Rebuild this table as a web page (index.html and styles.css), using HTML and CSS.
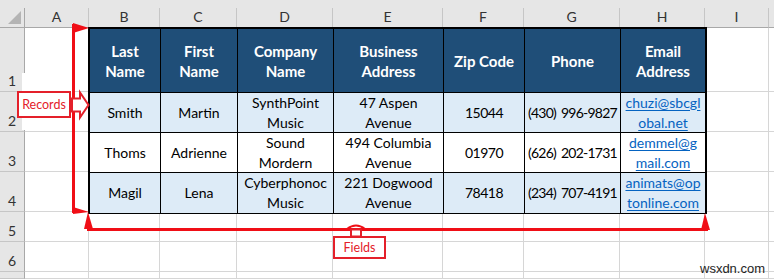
FILE: index.html
```html
<!DOCTYPE html>
<html>
<head>
<meta charset="utf-8">
<link rel="stylesheet" href="styles.css">
</head>
<body>
<div class="page">
  <div class="sheet">
    <div class="topstrip"></div>
    <div class="corner"><svg width="14" height="14" viewBox="0 0 14 14"><polygon points="13,0 13,13 0,13" fill="#b4b4b4"/></svg></div>
    <div class="ch">A</div><div class="ch">B</div><div class="ch">C</div><div class="ch">D</div><div class="ch">E</div><div class="ch">F</div><div class="ch">G</div><div class="ch">H</div><div class="ch">I</div><div class="ch last"></div>

    <div class="rh">1</div><div class="c"></div>
    <div class="table">
      <div class="th">Last<br>Name</div>
      <div class="th">First<br>Name</div>
      <div class="th">Company<br>Name</div>
      <div class="th">Business<br>Address</div>
      <div class="th">Zip Code</div>
      <div class="th">Phone</div>
      <div class="th end">Email<br>Address</div>

      <div class="td alt">Smith</div>
      <div class="td alt">Martin</div>
      <div class="td alt">SynthPoint<br>Music</div>
      <div class="td alt">47 Aspen<br>Avenue</div>
      <div class="td alt zip">15044</div>
      <div class="td alt phone">(430) 996-9827</div>
      <div class="td alt end"><a class="link">chuzi@sbcgl<br>obal.net</a></div>

      <div class="td">Thoms</div>
      <div class="td">Adrienne</div>
      <div class="td">Sound<br>Mordern</div>
      <div class="td">494 Columbia<br>Avenue</div>
      <div class="td zip">01970</div>
      <div class="td phone">(626) 202-1731</div>
      <div class="td end"><a class="link">demmel@g<br>mail.com</a></div>

      <div class="td alt bottom">Magil</div>
      <div class="td alt bottom">Lena</div>
      <div class="td alt bottom">Cyberphonoc<br>Music</div>
      <div class="td alt bottom">221 Dogwood<br>Avenue</div>
      <div class="td alt bottom zip">78418</div>
      <div class="td alt bottom phone">(234) 707-4191</div>
      <div class="td alt bottom end"><a class="link">animats@op<br>tonline.com</a></div>
    </div>
    <div class="c"></div><div class="c last"></div>

    <div class="rh">2</div><div class="c"></div><div class="c"></div><div class="c last"></div>
    <div class="rh">3</div><div class="c"></div><div class="c"></div><div class="c last"></div>
    <div class="rh">4</div><div class="c"></div><div class="c"></div><div class="c last"></div>

    <div class="rh">5</div><div class="c"></div><div class="c"></div><div class="c"></div><div class="c"></div><div class="c"></div><div class="c"></div><div class="c"></div><div class="c"></div><div class="c"></div><div class="c last"></div>
    <div class="rh">6</div><div class="c"></div><div class="c"></div><div class="c"></div><div class="c"></div><div class="c"></div><div class="c"></div><div class="c"></div><div class="c"></div><div class="c"></div><div class="c last"></div>
    <div class="rh"></div><div class="c"></div><div class="c"></div><div class="c"></div><div class="c"></div><div class="c"></div><div class="c"></div><div class="c"></div><div class="c"></div><div class="c"></div><div class="c last"></div>
  </div>

  <div class="patch"></div>

  <svg class="marks" width="774" height="279" viewBox="0 0 774 279">
    <g fill="#f00e16" stroke="none">
      <rect x="72" y="24" width="3" height="189"/>
      <polygon points="73,23 89,28 73,33"/>
      <polygon points="73,207 89,212 73,214"/>
      <rect x="87" y="228" width="621" height="3"/>
      <polygon points="88,212 93,229 84,229"/>
      <polygon points="705,213 710,230 701,230"/>
    </g>
    <path d="M347 229 Q356 222 365 229" fill="none" stroke="#f00e16" stroke-width="2"/>
    <rect x="351" y="229.5" width="10" height="7" fill="#fff" stroke="#e4202a" stroke-width="2"/>
    <polygon points="72,98.5 80,98.5 80,92.5 88.5,105 80,117.5 80,111.5 72,111.5" fill="#fff" stroke="#e4202a" stroke-width="2"/>
  </svg>

  <div class="label records">Records</div>
  <div class="label fields">Fields</div>
  <div class="watermark">wsxdn.com</div>
</div>
</body>
</html>
```

FILE: styles.css
```css
* { box-sizing: border-box; }
html, body { margin: 0; padding: 0; background: #fff; }
.page {
  position: relative;
  width: 774px;
  height: 279px;
  overflow: hidden;
  font-family: Lato, "Liberation Sans", sans-serif;
  font-size: 14px;
  color: #000;
}
.sheet {
  display: grid;
  grid-template-columns: 25px 64px 71px 77px 96px 110px 81px 96px 85px 64px 1fr;
  grid-template-rows: 8px 20px 64px 40px 40px 40px 30px 30px 1fr;
  width: 774px;
  height: 279px;
}
.topstrip { grid-column: 1 / -1; background: #e6e6e6; }
.corner {
  background: #e6e6e6;
  border-right: 1px solid #a8a8a8;
  border-bottom: 1px solid #a8a8a8;
  display: flex;
  align-items: flex-end;
  justify-content: flex-end;
  padding: 0 2px 2px 0;
}
.ch {
  background: #e6e6e6;
  border-right: 1px solid #c6c6c6;
  border-bottom: 1px solid #a8a8a8;
  display: flex;
  align-items: center;
  justify-content: center;
  color: #333;
  font-size: 14px;
  line-height: 16px;
  padding-bottom: 1px;
}
.rh {
  background: #e6e6e6;
  border-right: 1px solid #a8a8a8;
  border-bottom: 1px solid #c6c6c6;
  display: flex;
  align-items: flex-end;
  justify-content: center;
  color: #333;
  font-size: 14px;
  line-height: 16px;
  padding-bottom: 2px;
}
.c {
  border-right: 1px solid #d6d6d6;
  border-bottom: 1px solid #d6d6d6;
}
.c.last, .ch.last { border-right: none; }

.table {
  grid-column: 3 / 10;
  grid-row: 3 / 7;
  margin: -1px -2px -2px -1px;
  border: 2px solid #000;
  display: grid;
  grid-template-columns: 71px 77px 96px 110px 81px 96px 1fr;
  grid-template-rows: 64px 40px 40px 1fr;
  background: #fff;
  position: relative;
  z-index: 1;
}
.th, .td {
  display: flex;
  align-items: center;
  justify-content: center;
  text-align: center;
  line-height: 20px;
  white-space: nowrap;
  border-right: 1px solid #000;
  border-bottom: 1px solid #000;
}
.th {
  background: #1f4e78;
  color: #fff;
  font-weight: 700;
  font-size: 15px;
}
.td.alt { background: #ddebf7; }
.zip { letter-spacing: -0.5px; }
.phone { letter-spacing: -0.75px; word-spacing: 2px; }
.end { border-right: none; }
.bottom { border-bottom: none; }
.link {
  color: #0563c1;
  text-decoration: underline;
  text-underline-offset: 2px;
}

.patch {
  position: absolute;
  left: 22px;
  top: 73px;
  width: 50px;
  height: 57px;
  background: #fff;
  z-index: 2;
}
.marks {
  position: absolute;
  left: 0;
  top: 0;
  z-index: 3;
  pointer-events: none;
}
.label {
  position: absolute;
  z-index: 4;
  background: #fff;
  border: 2px solid #e4202a;
  color: #e4202a;
  font-size: 12.5px;
  display: flex;
  align-items: center;
  justify-content: center;
}
.records { left: 17px; top: 91px; width: 54px; height: 27px; }
.fields { left: 333px; top: 236px; width: 53px; height: 23px; }
.watermark {
  position: absolute;
  z-index: 4;
  left: 700px;
  top: 261px;
  font-family: "Liberation Sans", Arial, sans-serif;
  font-size: 13px;
  color: #1e1e1e;
}
```
